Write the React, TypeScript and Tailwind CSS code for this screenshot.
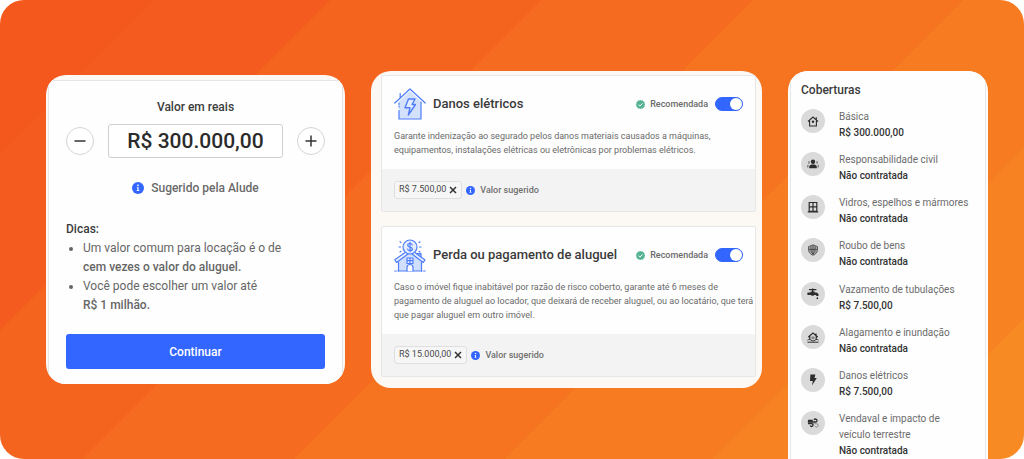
import { useState, type ReactNode } from "react";

const bands =
  "bg-[linear-gradient(135deg,#f4581d_0_10.5%,#f45b1e_10.5%_22.3%,#f5641f_22.3%_36.5%,#f56c20_36.5%_50.8%,#f67420_50.8%_65%,#f67b21_65%_79%,#f78222_79%_90.5%,#f78a23_90.5%)]";

function InfoIcon({ className }: { className: string }) {
  return (
    <svg viewBox="0 0 12 12" className={className} aria-hidden="true">
      <circle cx="6" cy="6" r="6" fill="#3366ff" />
      <circle cx="6" cy="3.3" r="0.9" fill="#fff" />
      <path d="M4.8 5.2h1.8v3h.8v.9H4.6v-.9h.8V6.1h-.6z" fill="#fff" />
    </svg>
  );
}

function CheckIcon() {
  return (
    <svg viewBox="0 0 12 12" className="size-[9px]" aria-hidden="true">
      <path
        d="M6 0l1.500.8h1.700l.8 1.300 1.400.9v1.600L12 6l-.6 1.400v1.600l-1.400.9-.8 1.300H7.500L6 12l-1.500-.8H2.800L2 9.900.6 9V7.400L0 6l.6-1.400V3L2 2.100 2.800.8h1.700z"
        fill="#55b295"
      />
      <path d="M3.400 6.200l1.900 1.900 3.400-3.600" fill="none" stroke="#fff" strokeWidth="1.300" />
    </svg>
  );
}

function ElectricHouse() {
  return (
    <svg viewBox="0 0 32 32" className="size-8 shrink-0" fill="none" stroke="#4f7dfb" strokeWidth="1.200" strokeLinejoin="round" strokeLinecap="round" aria-hidden="true">
      <path d="M5 13.500L16 3l11 10.500V31H5z" fill="#d3e1fd" stroke="none" />
      <path d="M5 19v-1M5 22.500V31h22V14" />
      <path d="M5 15v1.500" />
      <path d="M6.200 10V5.500" />
      <path d="M.8 15L16 1l15.200 14" />
      <path d="M14.500 11h6.500l-3 5.500h3.500L14.300 27l1.700-7.200h-5z" fill="#e4edff" strokeWidth="1.400" />
    </svg>
  );
}

function MoneyHouse() {
  return (
    <svg viewBox="0 0 32 33" className="h-[33px] w-8 shrink-0" fill="none" stroke="#4f7dfb" strokeWidth="1.200" strokeLinejoin="round" strokeLinecap="round" aria-hidden="true">
      <path d="M4.500 22L16 13l11 9v10h-22z" fill="#cfdffd" stroke="none" />
      <path d="M22.500 14.500h4.500v6l-4.500-3.800z" fill="#9fbcfb" />
      <path d="M16 13.500L2.500 23.500l-1.700-2.700L14 11.500h4l13 9.500-1.700 2.500z" fill="#eaf1ff" />
      <path d="M4.500 23v9M27.500 23v9" />
      <path d="M.8 32h1.600M4 32h24M29.600 32h1.600" />
      <path d="M13 32v-3.500a3 3 0 0 1 6 0V32" fill="#fff" />
      <path d="M13 19h6v5.500h-6zM16 19v5.500M13 21.700h6" fill="#eaf1ff" />
      <circle cx="16" cy="8" r="7" fill="#e4edff" />
      <path d="M18.300 5.900c-.3-1-1.200-1.400-2.300-1.400-1.300 0-2.300.6-2.300 1.700 0 2.500 4.700 1.200 4.700 3.700 0 1.100-1.100 1.700-2.400 1.700s-2.300-.6-2.500-1.600M16 3.300v9.400" />
      <path d="M6 2.800l1 .7M26 2.800l-1 .7M5 8h1.500M27 8h-1.500M6 13l1-.7M26 13l-1-.7" />
    </svg>
  );
}

const glyphs: Record<string, ReactNode> = {
  home: (
    <>
      <path d="M1 6.500L6 2l5 4.500M2.600 5.800V11h6.800V5.800M9.300 4.500V2.300" fill="none" stroke="currentColor" strokeWidth="1.100" />
      <circle cx="6" cy="6.800" r="1.200" fill="currentColor" />
    </>
  ),
  people: (
    <>
      <circle cx="6" cy="3.800" r="2.200" />
      <path d="M2.200 10.300V8.700C2.200 7 4 6.500 6 6.500s3.800.5 3.800 2.200v1.600z" />
      <path d="M2.600 3.200a1.300 1.300 0 1 0 .1 2.500zM9.400 3.200a1.300 1.300 0 1 1-.1 2.500zM0 9.600V8c0-1 .5-1.400 1.500-1.500v3.100zM12 9.600V8c0-1-.5-1.400-1.500-1.500v3.100z" opacity=".5" />
    </>
  ),
  window: (
    <path d="M2.200 1.500h7.600v8.800H2.200zM6 1.500v8.800M2.200 5.800h7.600M.8 10.800h10.400" fill="none" stroke="currentColor" strokeWidth="1.200" />
  ),
  shield: (
    <>
      <path d="M6 .8l4.500 1.800v3C10.500 8.300 8.600 10.400 6 11.300 3.400 10.400 1.500 8.300 1.500 5.600v-3z" opacity=".3" />
      <path d="M6 .8l4.500 1.800v3C10.500 8.300 8.600 10.400 6 11.300 3.400 10.400 1.500 8.300 1.500 5.600v-3zM6 1v10M1.600 5.400h8.800M3.800 2.300l.4 5.500L6 10l1.800-2.200.4-5.500" fill="none" stroke="currentColor" strokeWidth=".8" opacity=".8" />
    </>
  ),
  tap: (
    <path d="M2 1h3V.4h1.400V1h3v1.300h-3v1.200h1.300v1h1.300c1.600 0 2.500.9 2.500 2.600v.8H9.300c0-.8-.3-1-.9-1H7.400c-.5 1-3.100 1-3.600 0H.4V4.500h3.200v-1H5V2.300H2zM10.300 8.800c.5.800.8 1.200.8 1.600a.8.800 0 0 1-1.600 0c0-.4.300-.8.800-1.600z" />
  ),
  flood: (
    <>
      <path d="M1.300 6L6 2l4.700 4M2.800 5.200v3.300M9.200 5.200v3.300M9 4V2.400" fill="none" stroke="currentColor" strokeWidth="1.200" />
      <path d="M4.500 5.500h3v2.600h-3z" opacity=".5" />
      <path d="M.5 9.200c1.300-1 2.300-1 3.600 0s2.500 1 3.800 0 2.300-1 3.600 0M.5 11.200h11" fill="none" stroke="currentColor" strokeWidth="1" />
    </>
  ),
  bolt: <path d="M3.400.6h5L7.500 4h2.300L5 11.600 5.800 7H3z" />,
  wind: (
    <>
      <path d="M.8 5h7.700a1.500 1.500 0 1 0-1.400-2M1 3.500h4.800M1 6.700h3.600a1.400 1.400 0 1 1-1.300 1.800" fill="none" stroke="currentColor" strokeWidth="1.300" />
      <path d="M5.500 6.700h4a1.700 1.700 0 1 1-1.600 2.200" fill="none" stroke="currentColor" strokeWidth=".9" opacity=".45" />
    </>
  ),
};

const coverages = [
  { icon: "home", name: "Básica", value: "R$ 300.000,00" },
  { icon: "people", name: "Responsabilidade civil", value: "Não contratada" },
  { icon: "window", name: "Vidros, espelhos e mármores", value: "Não contratada" },
  { icon: "shield", name: "Roubo de bens", value: "Não contratada" },
  { icon: "tap", name: "Vazamento de tubulações", value: "R$ 7.500,00" },
  { icon: "flood", name: "Alagamento e inundação", value: "Não contratada" },
  { icon: "bolt", name: "Danos elétricos", value: "R$ 7.500,00" },
  { icon: "wind", name: "Vendaval e impacto de veículo terrestre", value: "Não contratada" },
];

function formatReais(amount: number) {
  return "R$ " + String(amount).replace(/\B(?=(\d{3})+$)/g, ".") + ",00";
}

const roundButton =
  "flex size-7 shrink-0 items-center justify-center rounded-full border border-[#d4d4d4] bg-white text-[#333]";

function ValueCard() {
  const [amount, setAmount] = useState(300000);
  return (
    <section className="mt-1 self-start overflow-hidden rounded-[20px] bg-[#fcf9f5] px-[2px] pt-[5px]">
      <div className="border border-b-0 border-[#e4e6e8] bg-[#fefefe] px-[17px] pt-4 pb-[15px]">
        <label htmlFor="amount" className="block text-center text-xs leading-5 font-medium text-[#3c3c3c]">
          Valor em reais
        </label>
        <div className="mt-[7px] flex items-center justify-between gap-[14px]">
          <button type="button" aria-label="Diminuir" className={roundButton} onClick={() => setAmount(Math.max(0, amount - 10000))}>
            <svg viewBox="0 0 12 12" className="size-3" aria-hidden="true">
              <path d="M.5 6h11" stroke="currentColor" strokeWidth="1.500" />
            </svg>
          </button>
          <input
            id="amount"
            readOnly
            value={formatReais(amount)}
            className="h-[34px] w-full min-w-0 rounded-[3px] border border-[#cfcfcf] bg-white text-center text-[21px] font-medium text-[#2b2b2b]"
          />
          <button type="button" aria-label="Aumentar" className={roundButton} onClick={() => setAmount(amount + 10000)}>
            <svg viewBox="0 0 12 12" className="size-3" aria-hidden="true">
              <path d="M.5 6h11M6 .5v11" stroke="currentColor" strokeWidth="1.500" />
            </svg>
          </button>
        </div>
        <p className="mt-5 flex items-center justify-center gap-[7px] text-xs leading-5 font-medium text-[#6a6a6a]">
          <InfoIcon className="size-3" />
          Sugerido pela Alude
        </p>
        <h2 className="mt-[22px] text-xs leading-[19px] font-medium text-[#3c3c3c]">Dicas:</h2>
        <ul className="list-disc pl-[17px] text-xs leading-[19px] text-[#666]">
          <li>
            Um valor comum para locação é o de
            <br />
            <b className="font-medium">cem vezes o valor do aluguel.</b>
          </li>
          <li>
            Você pode escolher um valor até
            <br />
            <b className="font-medium">R$ 1 milhão.</b>
          </li>
        </ul>
        <button type="button" className="mt-[19px] h-[35px] w-full rounded-[3px] bg-[#3366ff] text-xs font-medium text-white">
          Continuar
        </button>
      </div>
    </section>
  );
}

type OfferProps = { id: string; icon: ReactNode; title: string; text: string; value: string };

function Offer({ id, icon, title, text, value }: OfferProps) {
  return (
    <article className="rounded-[2px] border border-[#e6e7e8] bg-[#fefefe]">
      <div className="pt-3 pb-3 pl-3">
        <div className="flex h-8 items-center pr-3">
          {icon}
          <h2 className="ml-[7px] flex-1 text-[13px] leading-4 font-medium whitespace-nowrap text-[#3a3a3a]">{title}</h2>
          <CheckIcon />
          <label htmlFor={id} className="mr-[7px] ml-[5px] text-[9px] leading-4 font-medium text-[#6a6a6a]">
            Recomendada
          </label>
          <input
            id={id}
            type="checkbox"
            defaultChecked
            className="h-[14px] w-7 shrink-0 appearance-none rounded-full border border-[#999] bg-[#aaa] before:block before:size-3 before:rounded-full before:bg-white checked:border-[#3366ff] checked:bg-[#3366ff] checked:before:ml-[14px]"
          />
        </div>
        <p className="mt-[9px] text-[9px] leading-[14px] text-[#6a6a6a]">{text}</p>
      </div>
      <div className="flex items-center bg-[#f3f3f3] px-3 py-3">
        <span className="flex h-[18px] items-center gap-[3px] rounded-[3px] border border-[#dfdfdf] bg-[#f6f6f6] px-1 text-[9px] text-[#4a4a4a]">
          {value}
          <button type="button" aria-label="Remover valor" className="text-[#333]">
            <svg viewBox="0 0 8 8" className="size-2" aria-hidden="true">
              <path d="M1 1l6 6M7 1L1 7" stroke="currentColor" strokeWidth="1.500" />
            </svg>
          </button>
        </span>
        <InfoIcon className="ml-1 size-[9px]" />
        <span className="ml-[5px] text-[9px] leading-4 font-medium text-[#707070]">Valor sugerido</span>
      </div>
    </article>
  );
}

export default function App() {
  return (
    <main
      className={
        "grid min-h-screen grid-cols-[299fr_391fr_200fr] gap-[26px] overflow-hidden rounded-[24px] pt-[71px] pr-9 pl-[46px] font-['Roboto',sans-serif] " +
        bands
      }
    >
      <ValueCard />
      <section className="flex flex-col gap-[14px] self-start rounded-[20px] bg-[#fcf9f5] pt-1 pr-[6px] pb-[11px] pl-[10px]">
        <Offer
          id="electric"
          icon={<ElectricHouse />}
          title="Danos elétricos"
          text="Garante indenização ao segurado pelos danos materiais causados a máquinas, equipamentos, instalações elétricas ou eletrônicas por problemas elétricos."
          value="R$ 7.500,00"
        />
        <Offer
          id="rent"
          icon={<MoneyHouse />}
          title="Perda ou pagamento de aluguel"
          text="Caso o imóvel fique inabitável por razão de risco coberto, garante até 6 meses de pagamento de aluguel ao locador, que deixará de receber aluguel, ou ao locatário, que terá que pagar aluguel em outro imóvel."
          value="R$ 15.000,00"
        />
      </section>
      <section className="flex flex-col overflow-hidden rounded-t-[20px] bg-[#fcfcfb] px-[2px]">
        <div className="flex flex-1 flex-col border-x border-[#e4e6e8] bg-[#fefefe] pt-[11px] pr-2 pl-[10px]">
          <h2 className="text-xs leading-4 font-medium text-[#3a3a3a]">Coberturas</h2>
          <ul className="mt-[11px] flex flex-1 flex-col justify-between gap-[11px]">
            {coverages.map((item) => (
              <li key={item.icon} className="flex gap-[14px] text-[10px] leading-4">
                <span className="flex size-6 shrink-0 items-center justify-center rounded-full bg-[#dadada] text-[#2d2d2d]">
                  <svg viewBox="0 0 12 12" className="size-3" fill="currentColor" aria-hidden="true">
                    {glyphs[item.icon]}
                  </svg>
                </span>
                <p className="max-w-[132px] text-[#6c6c6c]">
                  {item.name}
                  <b className="block font-medium text-[#333]">{item.value}</b>
                </p>
              </li>
            ))}
          </ul>
        </div>
      </section>
    </main>
  );
}
